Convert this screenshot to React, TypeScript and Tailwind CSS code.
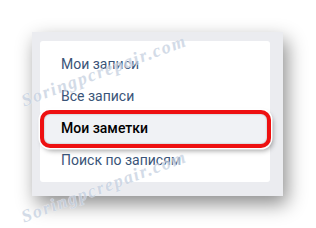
import React from "react";

const items = ["Мои записи", "Все записи", "Мои заметки", "Поиск по записям"];

function Watermark({ left, top }: { left: number; top: number }) {
  return (
    <div
      className="pointer-events-none absolute origin-left whitespace-nowrap text-[18px] font-bold italic text-[#c5d0e0] opacity-75"
      style={{
        left,
        top,
        transform: "rotate(-20.5deg)",
        fontFamily: '"Liberation Serif", serif',
        textShadow: "0 0 1px #fff, 0 0 1px #fff",
        letterSpacing: "1.6px",
      }}
    >
      Soringpcrepair.com
    </div>
  );
}

export default function App() {
  return (
    <div className="relative h-[228px] w-[316px] overflow-hidden bg-white" style={{ fontFamily: 'Roboto, "Open Sans", sans-serif' }}>
      <div className="pl-[32px] pt-[32px]">
        <div className="w-[251px] bg-[#ebecf0] pb-[14px] pl-[8px] pr-[13px] pt-[9px] shadow-[4px_8px_18px_rgba(0,0,0,0.45)]">
          <div className="flex flex-col rounded-[3px] bg-white pb-[6px] pt-[7px]">
            {items.map((t, i) => {
              const sel = i === 2;
              return (
                <div key={t} className={`relative flex h-[32px] items-center pl-[21px] text-[14px] ${sel ? "bg-[#f0f2f5] font-medium text-black" : "text-[#3a5478]"}`}>
                  {t}
                  {sel && (
                    <div className="absolute -top-[2px] -bottom-[4px] left-0 -right-[1px] rounded-[10px] border-[4px] border-[#ee1111] shadow-[0_0_0_1.5px_#fff,2px_3px_5px_rgba(0,0,0,0.35),inset_0_0_2px_rgba(0,0,0,0.3)]" />
                  )}
                </div>
              );
            })}
          </div>
        </div>
      </div>
      <Watermark left={22} top={88} />
      <Watermark left={22} top={204} />
    </div>
  );
}
